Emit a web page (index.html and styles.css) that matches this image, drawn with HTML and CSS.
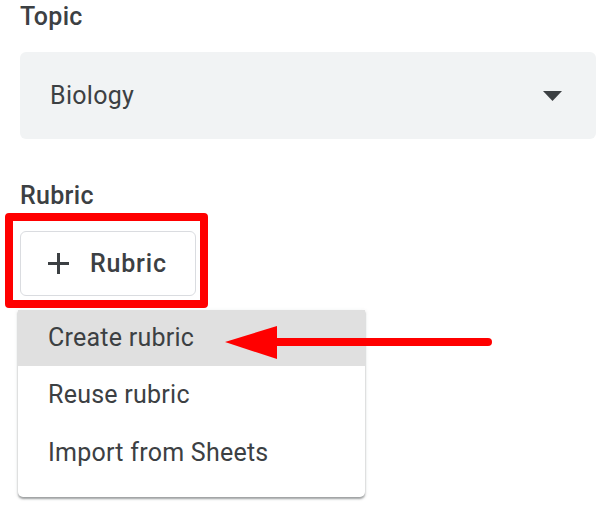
FILE: index.html
```html
<!DOCTYPE html>
<html>
<head>
<meta charset="utf-8">
<link rel="stylesheet" href="styles.css">
</head>
<body>
<div class="page">
  <div class="label label-topic">Topic</div>
  <div class="select">
    <span class="select-value">Biology</span>
    <svg class="select-caret" width="19" height="10" viewBox="0 0 19 10"><path d="M0 0h19L9.5 10z" fill="#3c4043"/></svg>
  </div>
  <div class="label label-rubric">Rubric</div>
  <div class="rubric-wrap">
    <button class="rubric-btn">
      <svg class="plus" width="23" height="23" viewBox="0 0 23 23"><path d="M11.5 1v21M1 11.5h21" stroke="#3c4043" stroke-width="3" fill="none"/></svg>
      <span>Rubric</span>
    </button>
    <div class="highlight-box"></div>
    <div class="menu">
      <div class="menu-item active">Create rubric</div>
      <div class="menu-item">Reuse rubric</div>
      <div class="menu-item">Import from Sheets</div>
    </div>
  </div>
  <svg class="pointer" width="602" height="510" viewBox="0 0 602 510">
    <line x1="272" y1="342" x2="488" y2="342" stroke="#ff0000" stroke-width="8" stroke-linecap="round"/>
    <path d="M225 342L277 326V359z" fill="#ff0000"/>
  </svg>
</div>
</body>
</html>
```
FILE: styles.css
```css
html, body {
  margin: 0;
  padding: 0;
  background: #ffffff;
}
body {
  font-family: Roboto, "Noto Sans", Arial, sans-serif;
  color: #3c4043;
  width: 602px;
  height: 510px;
  overflow: hidden;
}
.page {
  position: relative;
  padding: 0 6px 0 20px;
  display: flex;
  flex-direction: column;
  align-items: flex-start;
}
.label {
  font-size: 25px;
  font-weight: 500;
  line-height: 28px;
  letter-spacing: 0.3px;
  color: #3c4043;
}
.label-topic {
  margin-top: 3px;
}
.select {
  margin-top: 21px;
  width: 576px;
  height: 87px;
  box-sizing: border-box;
  background: #f1f3f4;
  border-radius: 6px;
  display: flex;
  align-items: center;
  justify-content: space-between;
  padding: 0 34px 0 30px;
}
.select-value {
  font-size: 25px;
  line-height: 28px;
  margin-top: 1px;
  letter-spacing: 0.3px;
}
.select-caret {
  display: block;
  margin-top: 0;
}
.label-rubric {
  margin-top: 43px;
}
.rubric-wrap {
  position: relative;
  margin-top: 21px;
}
.rubric-btn {
  width: 176px;
  height: 65px;
  box-sizing: border-box;
  background: #ffffff;
  border: 1px solid #dadce0;
  border-radius: 6px;
  display: flex;
  align-items: center;
  padding: 0 0 0 26px;
  font-family: inherit;
  font-size: 25px;
  font-weight: 500;
  letter-spacing: 0.8px;
  color: #3c4043;
  gap: 20px;
}
.rubric-btn span {
  line-height: 28px;
  margin-top: 1px;
}
.plus {
  display: block;
}
.highlight-box {
  position: absolute;
  left: -15px;
  top: -18px;
  width: 203px;
  height: 95px;
  box-sizing: border-box;
  border: 8px solid #ff0000;
  border-radius: 4px;
}
.menu {
  position: absolute;
  left: -2px;
  top: 79px;
  width: 347px;
  background: #ffffff;
  border-radius: 0 0 5px 5px;
  box-shadow: 0 2px 2px rgba(60, 64, 67, 0.45), 0 1px 4px rgba(60, 64, 67, 0.12);
  padding-bottom: 15px;
}
.menu-item {
  height: 57px;
  display: flex;
  align-items: center;
  padding-left: 30px;
  font-size: 25px;
  line-height: 28px;
  letter-spacing: 0.25px;
  color: #3c4043;
  margin-bottom: 1px;
}
.menu-item.active {
  background: #e0e0e0;
  margin-bottom: 0;
  height: 56px;
}
.pointer {
  position: absolute;
  left: 0;
  top: 0;
  pointer-events: none;
}
```
